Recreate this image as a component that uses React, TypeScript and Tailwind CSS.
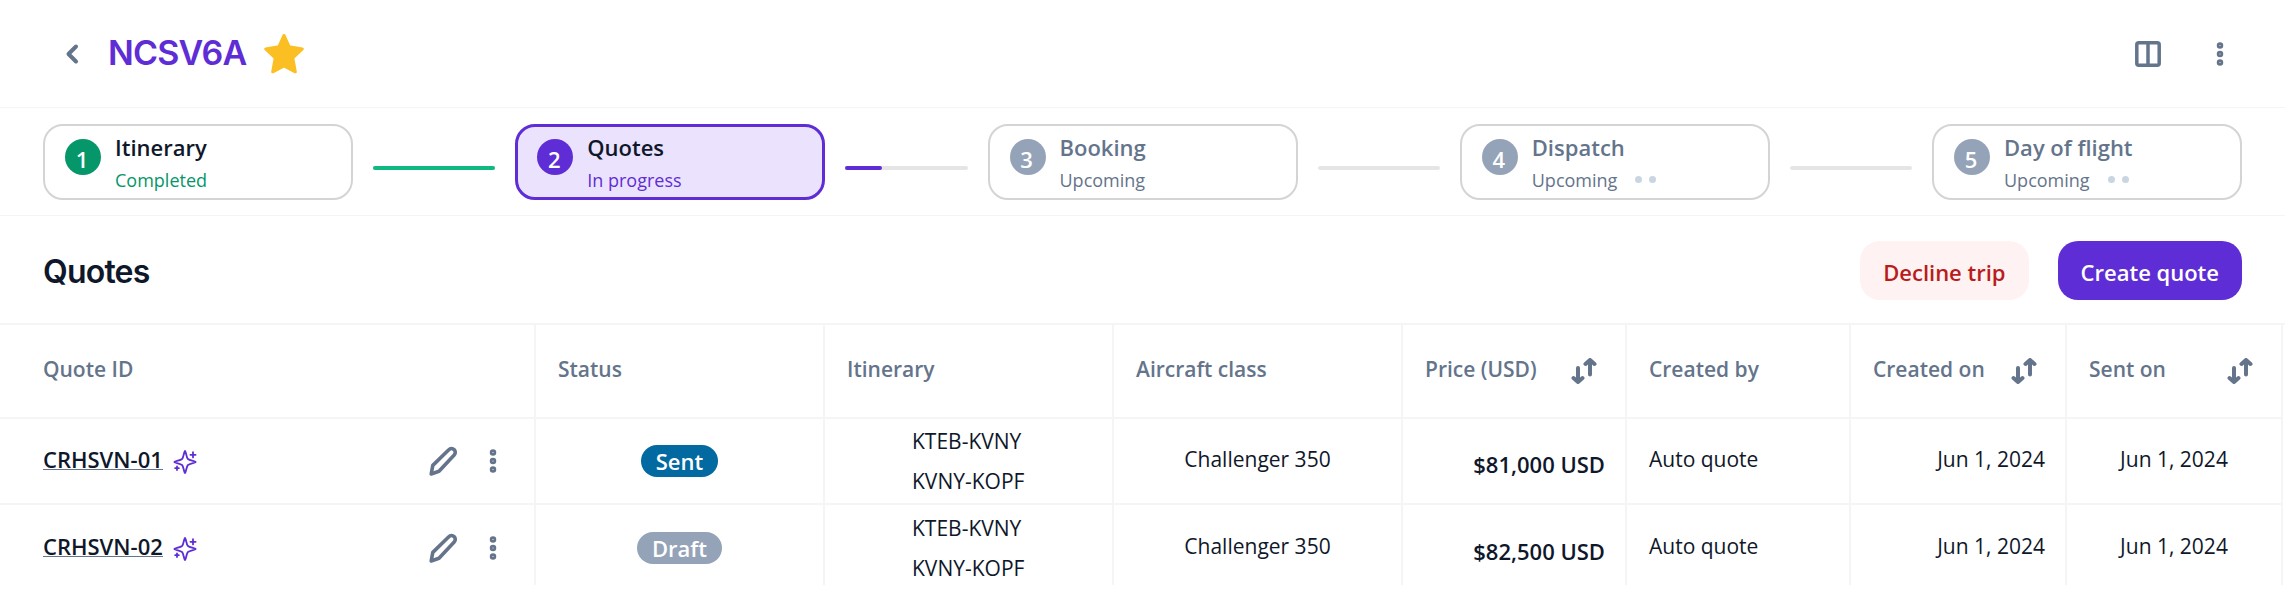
import clsx from "clsx";

type StepState = "done" | "active" | "upcoming";

interface Step {
  title: string;
  status: string;
  state: StepState;
  pending?: boolean;
}

const steps: Step[] = [
  { title: "Itinerary", status: "Completed", state: "done" },
  { title: "Quotes", status: "In progress", state: "active" },
  { title: "Booking", status: "Upcoming", state: "upcoming" },
  { title: "Dispatch", status: "Upcoming", state: "upcoming", pending: true },
  { title: "Day of flight", status: "Upcoming", state: "upcoming", pending: true },
];

const progress: Record<StepState, number> = { done: 100, active: 30, upcoming: 0 };

const columns = [
  { label: "Quote ID", width: "w-[536px]" },
  { label: "Status", width: "w-[289px]" },
  { label: "Itinerary", width: "w-[289px]" },
  { label: "Aircraft class", width: "w-[289px]" },
  { label: "Price (USD)", width: "w-[224px]", sortable: true },
  { label: "Created by", width: "w-[224px]" },
  { label: "Created on", width: "w-[216px]", sortable: true },
  { label: "Sent on", width: "w-[216px]", sortable: true },
];

const quotes = [
  {
    id: "CRHSVN-01",
    status: "Sent",
    legs: ["KTEB-KVNY", "KVNY-KOPF"],
    aircraft: "Challenger 350",
    price: "$81,000 USD",
    createdBy: "Auto quote",
    createdOn: "Jun 1, 2024",
    sentOn: "Jun 1, 2024",
  },
  {
    id: "CRHSVN-02",
    status: "Draft",
    legs: ["KTEB-KVNY", "KVNY-KOPF"],
    aircraft: "Challenger 350",
    price: "$82,500 USD",
    createdBy: "Auto quote",
    createdOn: "Jun 1, 2024",
    sentOn: "Jun 1, 2024",
  },
];

function BackIcon() {
  return (
    <svg className="w-[34px] h-[34px]" viewBox="0 0 34 34" fill="none" stroke="currentColor" strokeWidth="4" strokeLinecap="round" strokeLinejoin="round">
      <path d="M20 9.500L12.500 17l7.500 7.500" />
    </svg>
  );
}

function StarIcon() {
  return (
    <svg className="w-10 h-10" viewBox="0 0 40 40" fill="#fbbf24" stroke="#fbbf24" strokeWidth="3" strokeLinejoin="round">
      <path d="M20 1.500L25.200 12.800 38.300 15 28.800 24 31.300 37.800 20 32 8.700 37.800 11.200 24 1.700 15 14.800 12.800z" />
    </svg>
  );
}

function ColumnsIcon() {
  return (
    <svg className="w-[26px] h-[26px]" viewBox="0 0 26 26" fill="none" stroke="currentColor" strokeWidth="3.500">
      <rect x="1.800" y="1.800" width="22.400" height="22.400" rx="2" />
      <path d="M13 2v22" />
    </svg>
  );
}

function MoreIcon() {
  return (
    <svg className="w-6 h-6" viewBox="0 0 24 24" fill="none" stroke="currentColor" strokeWidth="2.700">
      <circle cx="12" cy="3.500" r="1.900" />
      <circle cx="12" cy="12" r="1.900" />
      <circle cx="12" cy="20.500" r="1.900" />
    </svg>
  );
}

function SparkleIcon() {
  return (
    <svg className="w-6 h-6" viewBox="0 0 24 24" fill="none" stroke="currentColor" strokeWidth="1.800" strokeLinecap="round" strokeLinejoin="round">
      <path d="M12 1c.9 0 1.400 6.200 2.800 7.900 1.500 1.800 8 2.200 8 3.100s-6.500 1.300-8 3.100C13.400 16.800 12.900 23 12 23s-1.400-6.200-2.800-7.900C7.700 13.300 1.200 12.900 1.200 12s6.500-1.300 8-3.100C10.600 7.200 11.100 1 12 1z" />
      <path d="M20 2.200v5.200M17.400 4.800h5.200M4 16.400v3.600M2.200 18.200h3.600" />
    </svg>
  );
}

function PencilIcon() {
  return (
    <svg className="w-7 h-[30px]" viewBox="0 0 28 30" fill="none" stroke="currentColor" strokeWidth="3.600" strokeLinecap="round" strokeLinejoin="round">
      <path d="M19.800 3.700a3.700 3.700 0 0 1 5.400 5.200L10 25.300 2.200 28l1.600-8.600z" />
    </svg>
  );
}

function SortIcon() {
  return (
    <svg className="w-[26px] h-[26px]" viewBox="0 0 26 26" fill="none" stroke="currentColor" strokeWidth="4" strokeLinecap="round" strokeLinejoin="round">
      <path d="M7 10v13M2.500 20L7 24l4.500-4M19 16.500V3M14.500 6L19 2l4.500 4" />
    </svg>
  );
}

function StepCard({ step, index }: { step: Step; index: number }) {
  const { state } = step;
  return (
    <li
      className={clsx(
        "flex h-[76px] w-[310px] shrink-0 gap-[14px] rounded-[20px]",
        state === "active"
          ? "border-[3px] border-[#5f2dd5] bg-[#ebe3fe] px-[19px] pt-1"
          : "border-2 border-neutral-300 px-5 pt-[5px]"
      )}
    >
      <span
        className={clsx(
          "mt-2 flex h-9 w-9 shrink-0 items-center justify-center rounded-full pt-1 pr-0.5 text-[22px] leading-8 font-semibold text-white",
          state === "done" && "bg-[#059669]",
          state === "active" && "bg-[#5f2dd5]",
          state === "upcoming" && "bg-[#94a3b8]"
        )}
      >
        {index + 1}
      </span>
      <div>
        <p className={clsx("text-[22px] leading-8 font-semibold", state === "upcoming" ? "text-[#64748b]" : "text-[#0f172a]")}>
          {step.title}
        </p>
        <div className="flex items-center gap-[18px]">
          <span
            className={clsx(
              "pt-px text-[18px] leading-8",
              state === "done" && "text-[#059669]",
              state === "active" && "text-[#5f2dd5]",
              state === "upcoming" && "text-[#64748b]"
            )}
          >
            {step.status}
          </span>
          {step.pending && (
            <span className="flex gap-[7px]">
              <span className="h-[7px] w-[7px] rounded-full bg-slate-300" />
              <span className="h-[7px] w-[7px] rounded-full bg-slate-300" />
            </span>
          )}
        </div>
      </div>
    </li>
  );
}

function Connector({ state }: { state: StepState }) {
  return (
    <li aria-hidden className="mx-5 mt-3 h-1 flex-1 rounded-full bg-neutral-200">
      <div
        className={clsx("h-1 rounded-full", state === "done" ? "bg-[#10b981]" : "bg-[#5f2dd5]")}
        style={{ width: `${progress[state]}%` }}
      />
    </li>
  );
}

export default function App() {
  return (
    <div className="bg-white font-['Open_Sans',sans-serif] text-[#0f172a]">
      {/* Header */}
      <header className="flex h-[108px] items-center border-b border-neutral-100 pr-[43px] pl-14 text-[#64748b]">
        <button aria-label="Back">
          <BackIcon />
        </button>
        <h1 className="ml-[18px] pb-0.5 font-['Inter',sans-serif] text-[34px] leading-10 font-semibold tracking-tight text-[#5f2dd5]">
          NCSV6A
        </h1>
        <button aria-label="Favourite" className="ml-[18px]">
          <StarIcon />
        </button>
        <div className="ml-auto flex items-center gap-[47px] pr-[10px]">
          <button aria-label="Columns">
            <ColumnsIcon />
          </button>
          <button aria-label="More">
            <MoreIcon />
          </button>
        </div>
      </header>

      {/* Steps */}
      <ol className="flex items-center border-b border-neutral-100 px-[43px] pt-4 pb-[15px]">
        {steps.map((step, i) => [
          <StepCard key={step.title} step={step} index={i} />,
          i < steps.length - 1 && <Connector key={`${step.title}-line`} state={step.state} />,
        ])}
      </ol>

      {/* Toolbar */}
      <div className="flex h-[107px] items-center justify-between px-[43px]">
        <h2 className="pt-1 font-['Inter',sans-serif] text-[32px] leading-9 font-semibold tracking-tight">Quotes</h2>
        <div className="flex gap-[29px] pt-px text-[22px] leading-8 font-semibold">
          <button className="h-[59px] rounded-[20px] bg-[#fef2f2] px-[23px] pt-1 text-[#b91c1c]">Decline trip</button>
          <button className="h-[59px] rounded-[20px] bg-[#5f2dd5] px-[23px] pt-1 text-white">Create quote</button>
        </div>
      </div>

      {/* Quotes table */}
      <div className="h-[262px] overflow-hidden border-t-2 border-neutral-100 pr-0.5">
        <table className="w-full table-fixed border-separate border-spacing-0 text-[21px] leading-8 whitespace-nowrap">
          <thead>
            <tr className="h-[94px]">
              {columns.map((col, i) => (
                <th
                  key={col.label}
                  className={clsx(
                    "border-r-2 border-b-2 border-neutral-100 pr-7 text-left font-semibold text-[#64748b]",
                    col.width,
                    i === 0 ? "pl-[43px]" : "pl-[22px]"
                  )}
                >
                  <div className="flex items-center justify-between">
                    <span className="pb-1">{col.label}</span>
                    {col.sortable && (
                      <button aria-label={`Sort by ${col.label}`}>
                        <SortIcon />
                      </button>
                    )}
                  </div>
                </th>
              ))}
            </tr>
          </thead>
          <tbody className="[&_td]:border-r-2 [&_td]:border-neutral-100 [&_tr:not(:last-child)_td]:border-b-2">
            {quotes.map((quote) => (
              <tr key={quote.id} className="h-[86px]">
                <td className="pr-[29px] pl-[43px]">
                  <div className="flex items-center">
                    <a href="#" className="mb-1 border-b border-[#64748b] text-[22px] leading-5 font-semibold">
                      {quote.id}
                    </a>
                    <span className="ml-[10px] pt-0.5 text-[#5f2dd5]">
                      <SparkleIcon />
                    </span>
                    <div className="ml-auto flex items-center gap-6 text-[#64748b]">
                      <button aria-label={`Edit ${quote.id}`}>
                        <PencilIcon />
                      </button>
                      <button aria-label={`More actions for ${quote.id}`}>
                        <MoreIcon />
                      </button>
                    </div>
                  </div>
                </td>
                <td className="text-center">
                  <span
                    className={clsx(
                      "inline-block rounded-full px-[15px] text-[22px] font-semibold text-white",
                      quote.status === "Sent" ? "bg-[#0369a1]" : "bg-[#94a3b8]"
                    )}
                  >
                    {quote.status}
                  </span>
                </td>
                <td>
                  <div className="mx-auto w-[113px] leading-10">
                    {quote.legs.map((leg) => (
                      <p key={leg}>{leg}</p>
                    ))}
                  </div>
                </td>
                <td className="pb-1 text-center">{quote.aircraft}</td>
                <td className="pt-1.5 pr-5 text-right text-[22px] font-semibold">{quote.price}</td>
                <td className="pb-1 pl-[22px]">{quote.createdBy}</td>
                <td className="pr-5 pb-1 text-right">{quote.createdOn}</td>
                <td className="pb-1 text-center">{quote.sentOn}</td>
              </tr>
            ))}
          </tbody>
        </table>
      </div>
    </div>
  );
}
